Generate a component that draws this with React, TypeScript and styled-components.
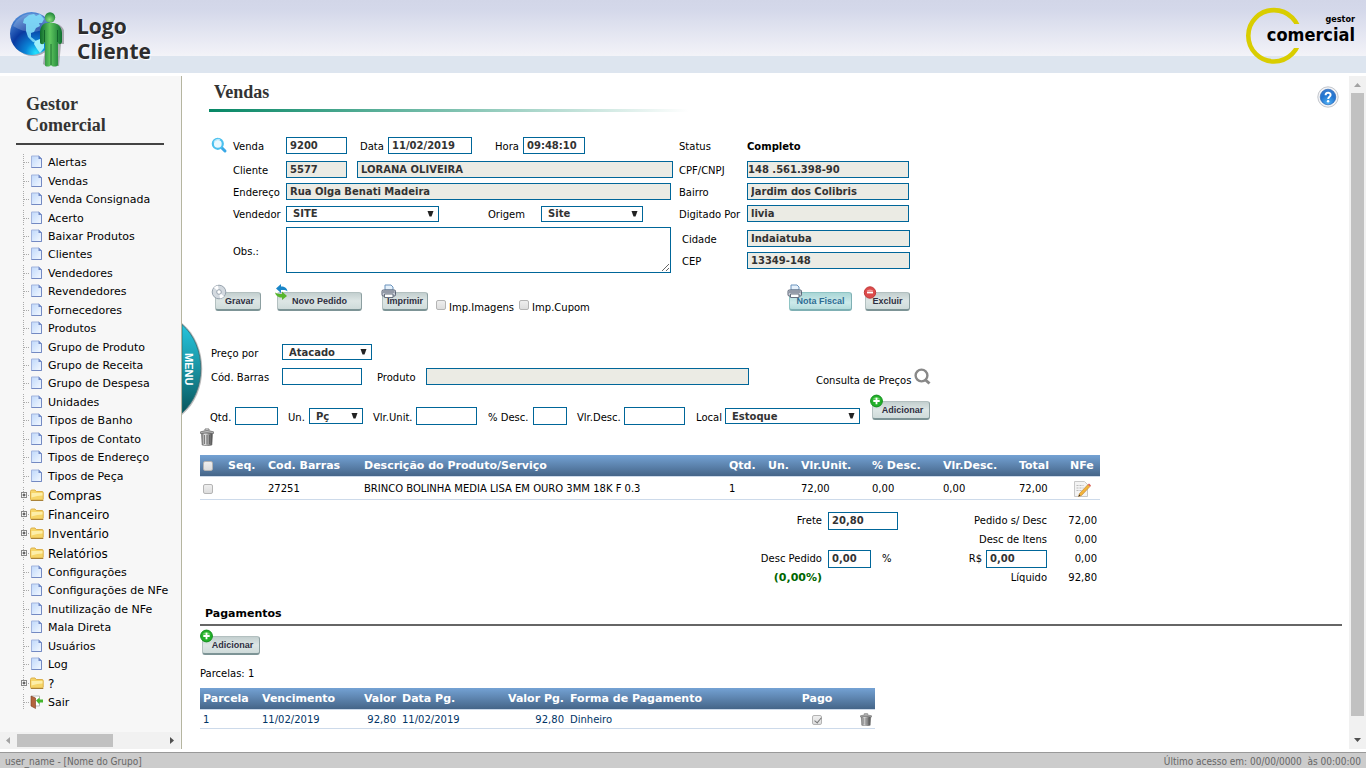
import React from "react";
import styled, { createGlobalStyle, css } from "styled-components";

const Global = createGlobalStyle`
  * { box-sizing: border-box; }
  body {
    margin: 0;
    background: #fff;
    color: #000;
    font: 10px/13px "DejaVu Sans", Verdana, sans-serif;
  }
  button, input, select, textarea { font: inherit; margin: 0; }
  svg { display: block; flex: none; }
`;

const serif = `"Liberation Serif", "Times New Roman", serif`;
const sans = `"Liberation Sans", Arial, sans-serif`;
const condensed = `"DejaVu Sans Condensed", Tahoma, "DejaVu Sans", sans-serif`;
const blue = "#006699";

/* ---------- page frame ---------- */

const Page = styled.div`
  display: flex;
  flex-direction: column;
  height: 100vh;
  min-width: 1180px;
`;

const Header = styled.header`
  display: flex;
  justify-content: space-between;
  flex: none;
  height: 73px;
  padding: 7px 11px 0 10px;
  background: linear-gradient(#d2d6e8 0, #d4d8ea 10px, #f3f3f8 56px, #dde5ef 56px);
`;

const ClientLogo = styled.div`
  display: flex;
  gap: 13px;
  padding-top: 4px;
`;

const ClientName = styled.div`
  padding-top: 3px;
  font: bold 21px/25px "Open Sans", "Noto Sans", sans-serif;
  color: #2d2d2d;
  text-shadow: 1px 1px 1px #fff;
`;

const Brand = styled.div`
  position: relative;
  width: 109px;
  height: 58px;
  text-align: right;
  font-family: ${condensed};
  font-weight: bold;
  & > svg { position: absolute; left: 0; top: 0; }
`;

const BrandSmall = styled.div`
  position: relative;
  padding-top: 6px;
  font-size: 9px;
  line-height: 12px;
`;

const BrandLarge = styled.div`
  position: relative;
  font-size: 18px;
  line-height: 19px;
`;

const Middle = styled.div`
  display: flex;
  flex: 1;
  min-height: 0;
  padding: 3px 0;
`;

const Footer = styled.footer`
  display: flex;
  justify-content: space-between;
  align-items: center;
  flex: none;
  height: 16px;
  padding: 1px 5px 0;
  border-top: 1px solid #999;
  background: #ccc;
  color: #666;
  font: 10px/13px ${condensed};
  white-space: pre;
`;

/* ---------- sidebar ---------- */

const Sidebar = styled.aside`
  display: flex;
  flex-direction: column;
  flex: none;
  width: 182px;
  border-right: 1px solid #b5b5a0;
  background: #f7f7f7;
`;

const SideBody = styled.div`
  display: flex;
  flex-direction: column;
  flex: 1;
  min-height: 0;
  padding: 18px 0 20px;
  overflow: auto;
  scrollbar-width: none;
`;

const SideTitle = styled.h2`
  flex: none;
  margin: 0 17px 9px 16px;
  padding: 0 10px 7px;
  border-bottom: 2px solid #444;
  font: bold 18px/21px ${serif};
  color: #333;
`;

const Tree = styled.ul`
  display: flex;
  flex-direction: column;
  flex: 1;
  margin: 0;
  padding: 0 0 0 20px;
  list-style: none;
`;

const TreeItem = styled.li<{ $folder?: boolean }>`
  display: flex;
  align-items: center;
  flex: 1 0 ${(p) => (p.$folder ? 19 : 18)}px;
  font-size: ${(p) => (p.$folder ? 12 : 11)}px;
  line-height: 16px;
  white-space: nowrap;
  & > svg { margin-bottom: 2px; }
`;

const TreeLink = styled.a`
  color: #000;
  text-decoration: none;
  padding-left: 4px;
`;

const BarH = styled.div`
  display: flex;
  align-items: center;
  justify-content: space-between;
  flex: none;
  height: 17px;
  margin-right: 1px;
  padding: 0 5px;
  background: #f1f1f1;
`;

const ThumbH = styled.div`
  width: 96px;
  height: 13px;
  margin: 0 auto 0 5px;
  background: #c1c1c1;
`;

const BarV = styled.div`
  display: flex;
  flex-direction: column;
  align-items: center;
  flex: none;
  width: 17px;
  padding: 6px 0 5px;
  background: #f1f1f1;
`;

const ThumbV = styled.div`
  flex: 1;
  width: 13px;
  margin: 4px 0 21px;
  background: #c1c1c1;
`;

/* ---------- content ---------- */

const Content = styled.main`
  position: relative;
  flex: 1;
  min-width: 0;
  padding: 6px 7px 0 18px;
  overflow: auto;
  scrollbar-width: none;
`;

const MenuTab = styled.button`
  position: absolute;
  left: 0;
  top: 247px;
  width: 21px;
  height: 92px;
  padding: 0;
  border: 0;
  background: none;
  color: #fff;
  font: bold 11px/14px ${sans};
  & > svg { position: absolute; left: 0; top: 0; }
  & > span { position: absolute; left: 0; top: 0; width: 14px; height: 92px; writing-mode: vertical-rl; text-align: center; }
`;

const TitleRow = styled.div`
  display: flex;
  justify-content: space-between;
  padding-right: 3px;
`;

const Title = styled.h1`
  width: 480px;
  height: 30px;
  margin: 0 0 25px 9px;
  padding: 0 5px;
  font: bold 18px/21px ${serif};
  color: #333;
  background: linear-gradient(90deg, #068765, #7cc0ae 50%, #fff) bottom / 100% 3px no-repeat;
`;

const IconButton = styled.button<{ $top?: number; $bottom?: number }>`
  display: block;
  flex: none;
  align-self: flex-start;
  margin: ${(p) => p.$top || 0}px 0 ${(p) => p.$bottom || 0}px;
  padding: 0;
  border: 0;
  background: none;
`;

const OrderForm = styled.section`
  display: flex;
  gap: 6px;
  padding-left: 11px;
`;

const LeftBlock = styled.div`
  display: flex;
  flex-direction: column;
  gap: 5px;
  width: 462px;
`;

const RightBlock = styled.div`
  display: flex;
  flex-direction: column;
  gap: 5px;
`;

const Address = styled.div`
  display: flex;
  flex-direction: column;
  gap: 5px;
  padding-top: 3px;
`;

const Row = styled.div<{ $tall?: boolean }>`
  display: flex;
  align-items: center;
  min-height: ${(p) => (p.$tall ? 19 : 17)}px;
  padding-bottom: ${(p) => (p.$tall ? 2 : 0)}px;
`;

const Lead = styled.div`
  width: 22px;
  flex: none;
`;

const textWidth = css<{ $w?: number; $pad?: number }>`
  flex: none;
  width: ${(p) => (p.$w ? p.$w + "px" : "auto")};
  padding-left: ${(p) => p.$pad || 0}px;
`;

const Label = styled.label<{ $w?: number; $pad?: number }>`
  ${textWidth}
  padding-top: 2px;
  white-space: nowrap;
`;

const Status = styled.output`
  padding-top: 2px;
  font-weight: bold;
`;

const Field = styled.input<{ $w: number; $tall?: boolean; $tight?: boolean }>`
  flex: none;
  width: ${(p) => p.$w}px;
  height: ${(p) => (p.$tall ? 18 : 17)}px;
  padding: 0 ${(p) => (p.$tight ? 0 : 3)}px;
  border: 1px solid ${blue};
  border-radius: 0;
  outline: 0;
  font-weight: bold;
  color: #333;
  background: #fff;
  &:read-only { background: #ebebe4; }
`;

const SelectBox = styled.span<{ $w: number }>`
  position: relative;
  flex: none;
  width: ${(p) => p.$w}px;
  height: 16px;
  & > svg { position: absolute; right: 5px; top: 5px; pointer-events: none; }
`;

const NativeSelect = styled.select`
  display: block;
  appearance: none;
  width: 100%;
  height: 16px;
  padding: 0 6px;
  border: 1px solid ${blue};
  border-radius: 0;
  background: #fff;
  color: #333;
  font-weight: bold;
`;

const Notes = styled.textarea`
  width: 385px;
  height: 46px;
  padding: 2px;
  border: 1px solid ${blue};
  color: #333;
  font-weight: bold;
`;

const Check = styled.input.attrs({ type: "checkbox" })`
  appearance: none;
  display: block;
  flex: none;
  width: 10px;
  height: 10px;
  border: 1px solid #b4b4b4;
  border-radius: 2px;
  background: linear-gradient(#eee, #ddd);
  &:checked::after {
    content: "";
    display: block;
    width: 3px;
    height: 6px;
    margin: 0 0 0 3px;
    border: solid #777;
    border-width: 0 1px 1px 0;
    transform: rotate(40deg);
  }
`;

const CheckLabel = styled.label`
  display: flex;
  gap: 3px;
  line-height: 15px;
  & > input { margin-top: 1px; }
  & > span { padding-top: 1px; }
`;

const Actions = styled.div`
  display: flex;
  align-items: flex-start;
  width: 695px;
  margin: 19px 0 0 15px;
  & > :nth-child(2) { margin-left: 16px; }
  & > :nth-child(3) { margin: 0 8px 0 20px; }
  & > label { margin: 7px 5px 0 0; }
  & > :nth-child(6) { margin-left: auto; }
  & > :nth-child(7) { margin-left: 13px; }
`;

const PushButton = styled.button<{ $w: number; $pad?: number; $teal?: boolean; $icon?: number }>`
  position: relative;
  flex: none;
  width: ${(p) => p.$w}px;
  height: 19px;
  padding: 0 0 0 ${(p) => p.$pad || 0}px;
  border: 1px solid ${(p) => (p.$teal ? "#8fc4c4" : "#b3c0c0")};
  border-width: 1px 1px 2px;
  border-right-color: ${(p) => (p.$teal ? "#7fb0b4" : "#8c9fa1")};
  border-bottom-color: ${(p) => (p.$teal ? "#7fb0b4" : "#7d9496")};
  border-radius: 3px;
  background: ${(p) =>
    p.$teal
      ? "linear-gradient(#a9d6d6, #cdeaea 60%, #b4dcdc)"
      : "linear-gradient(#c3cfcf, #dde6e5 50%, #cfdbda)"};
  color: ${(p) => (p.$teal ? "#2d6c94" : "#2e2e40")};
  font: bold 9px/14px ${sans};
  text-align: center;
  white-space: nowrap;
  & > svg { position: absolute; left: -${(p) => p.$icon || 5}px; top: -9px; }
`;

const ProductForm = styled.section`
  margin: 29px 0 -3px 10px;
`;

const Line = styled.div<{ $gap?: number }>`
  display: flex;
  align-items: center;
  margin-bottom: ${(p) => p.$gap || 0}px;
`;

const PriceLink = styled.a`
  display: flex;
  gap: 3px;
  margin: 0 0 0 67px;
  color: #000;
  text-decoration: none;
  & > span { padding-top: 8px; }
  & > svg { margin-top: 2px; }
`;

const AddSlot = styled.div`
  margin: 0 0 12px 12px;
  height: 18px;
`;

/* ---------- tables ---------- */

const Grid = styled.table<{ $w: number; $pad?: number; $ink?: string }>`
  width: ${(p) => p.$w}px;
  table-layout: fixed;
  border-collapse: separate;
  border-spacing: 0;
  color: ${(p) => p.$ink || "#000"};
  th {
    height: 21px;
    padding: 0 ${(p) => p.$pad || 0}px;
    color: #fff;
    font-size: 11px;
    text-align: left;
    white-space: nowrap;
  }
  thead { background: linear-gradient(#74a2d4, #456588); }
  td {
    padding: 1px ${(p) => p.$pad || 0}px 0;
    border: solid #cddaea;
    border-width: 1px 0;
    white-space: nowrap;
  }
  .end { text-align: right; }
  .end > button { margin-left: auto; }
  .mid { text-align: center; }
  .mid > * { margin: 0 auto; }
`;

const ItemRow = styled.tr<{ $h: number }>`
  height: ${(p) => p.$h}px;
`;

const Totals = styled.section`
  display: grid;
  grid-template-columns: 622px 6px 70px 88px 61px 50px;
  grid-auto-rows: 19px;
  align-items: center;
  width: 900px;
  margin-top: 11px;
  text-align: right;
  & > :nth-child(4n + 2) { grid-column: 3; }
`;

const Discount = styled.div`
  display: flex;
  align-items: center;
  gap: 11px;
`;

const Pair = styled.div`
  grid-column: span 2;
`;

const MoneyField = styled.div`
  display: flex;
  align-items: center;
  justify-content: flex-end;
  gap: 4px;
  grid-column: span 2;
`;

const Green = styled.strong`
  color: #006600;
  font-size: 11px;
`;

const SectionTitle = styled.h3`
  margin: 20px 0 10px;
  padding: 0 5px 3px;
  border-bottom: 2px solid #666;
  font-size: 11px;
  line-height: 14px;
`;

const Installments = styled.p`
  margin: 12px 0 8px;
`;

const AddPayment = styled.div`
  margin-left: 2px;
  height: 19px;
`;

/* ---------- drawings ---------- */

const Globe = () => (
  <svg width="54" height="57" viewBox="0 0 54 57">
    <defs>
      <radialGradient id="gl" cx=".6" cy=".95" r=".95">
        <stop offset="0" stopColor="#22e4ff" />
        <stop offset=".25" stopColor="#0a86d8" />
        <stop offset=".6" stopColor="#0a3aa0" />
        <stop offset="1" stopColor="#4f8ad6" />
      </radialGradient>
      <linearGradient id="mn" x1="0" x2="1">
        <stop offset="0" stopColor="#0d6a2c" />
        <stop offset=".45" stopColor="#5fc75f" />
        <stop offset="1" stopColor="#0f7030" />
      </linearGradient>
      <radialGradient id="hd" cx=".45" cy=".7" r=".7">
        <stop offset="0" stopColor="#8be07c" />
        <stop offset="1" stopColor="#1c8438" />
      </radialGradient>
    </defs>
    <ellipse cx="23" cy="24" rx="21.5" ry="21" fill="#5b6478" opacity=".5" />
    <circle cx="21.500" cy="22.500" r="21.500" fill="url(#gl)" />
    <path d="M3 15C8 4 20 0 31 4c5 3 7 7 8 12-10 6-24 7-36-1z" fill="#fff" opacity=".2" />
    <path d="M14 8l5-4 5-1 2 2 4-2 4 5-2 4-3 0 1 3-4 2-2 4-3 1 0 4 4 3 2 3-4-1-5-5-2-6 0-7-3-1z" fill="#7fdcf8" opacity=".9" />
    <path d="M25 30l5-2 4 2v7l-4 5-3-4-3-5z" fill="#9ff0fb" />
    <path d="M38 13h9c5 1 8 6 8 12v8h-4l-2 22h-6l-2-1-5 1-3-2z" fill="#333" opacity=".35" />
    <path d="M36 12h8c5 1 8 5 8 10v9c-1 3-4 3-4 0v23c-1 2-6 2-7 0-1 2-6 2-6 0V31c-1 3-5 3-5 0v-9c0-5 2-9 6-10z" fill="url(#mn)" />
    <path d="M41 33v21M34.500 19v12M47.500 19v12" stroke="#0c5a26" strokeWidth=".8" />
    <circle cx="40" cy="6.500" r="5.200" fill="url(#hd)" />
  </svg>
);

const Ring = () => (
  <svg width="56" height="58" viewBox="0 0 56 58">
    <clipPath id="cut"><path d="M0 0h56v17H40v24h16v17H0z" /></clipPath>
    <circle cx="28" cy="28.800" r="25.700" fill="none" stroke="#d9cd00" strokeWidth="4.600" clipPath="url(#cut)" />
  </svg>
);

const Arrow = ({ d, c }: { d: string; c: string }) => (
  <svg width="7" height="7" viewBox="0 0 7 7"><path d={d} fill={c} /></svg>
);

const Twig = ({ plus }: { plus?: boolean }) => (
  <svg width="10" height="16" viewBox="0 0 10 16">
    <path d="M3.500 0v15M4 8.500h6" stroke="#aaa" strokeDasharray="1 1" fill="none" />
    {plus && (
      <>
        <rect x="1.500" y="5.500" width="5" height="5" fill="#fff" stroke="#888" />
        <path d="M2.500 8h3M4 6.500v3" stroke="#333" />
      </>
    )}
  </svg>
);

const FileIcon = () => (
  <svg width="14" height="16" viewBox="0 0 14 16">
    <defs><linearGradient id="pg" x1="0" y1="0" x2="1" y2="1"><stop offset="0" stopColor="#bfd8fb" /><stop offset="1" stopColor="#f4f9ff" /></linearGradient></defs>
    <path d="M1.500 2h7.500l2.500 2.500V13.500h-10z" fill="url(#pg)" stroke="#a3b5de" />
    <path d="M11.500 4.500v9h-10" fill="none" stroke="#7389c2" />
    <path d="M8.500 1.500v3.500H12z" fill="#6f87c4" />
  </svg>
);

const FolderIcon = () => (
  <svg width="14" height="14" viewBox="0 0 14 14">
    <path d="M.5 11V3.500q0-1.500 1.500-1.500h3l1.200 1.500H12q1.200 0 1.200 1.200V11q0 1-1 1H1.500q-1 0-1-1z" fill="#f6d568" stroke="#dcb04a" />
    <path d="M1.500 5h11v2.500q-5 0-11 2z" fill="#fdeea8" />
    <path d="M.8 12.500h12.500" stroke="#a98238" />
  </svg>
);

const DoorIcon = () => (
  <svg width="14" height="14" viewBox="0 0 14 14">
    <path d="M1.500 1h8v10h-8z" fill="#fff" stroke="#bbb" />
    <path d="M1 1l4.500 2v10.500L1 11z" fill="#b4643c" stroke="#7a3c20" strokeWidth=".6" />
    <path d="M6 5.500L9.500 2.500v2H13v3H9.500v2z" fill="#44b62c" />
  </svg>
);

const BlueSearch = () => (
  <svg width="17" height="17" viewBox="0 0 17 17">
    <path d="M10.500 10.500l3.500 3.500" stroke="#3aa8e6" strokeWidth="3" strokeLinecap="round" />
    <circle cx="6.800" cy="6.800" r="5" fill="#e9f8fe" stroke="#4cc0ee" strokeWidth="2.200" />
    <path d="M3 5.500a4.500 4.500 0 0 1 6-2.800" stroke="#b5e8fb" fill="none" strokeWidth="1.200" />
  </svg>
);

const GreySearch = () => (
  <svg width="17" height="17" viewBox="0 0 17 17">
    <circle cx="7.500" cy="7.500" r="5.900" fill="none" stroke="#888" strokeWidth="2.400" />
    <path d="M11 11.500l4.500 4" stroke="#888" strokeWidth="3" />
  </svg>
);

const HelpIcon = () => (
  <svg width="22" height="22" viewBox="0 0 22 22">
    <defs><radialGradient id="hp" cx=".5" cy=".9" r=".9"><stop offset="0" stopColor="#4fb0f4" /><stop offset=".6" stopColor="#2173cf" /><stop offset="1" stopColor="#3c7fd0" /></radialGradient></defs>
    <circle cx="11" cy="11" r="10.200" fill="#f2f3f6" stroke="#c3c6cc" />
    <circle cx="11" cy="11" r="7.800" fill="url(#hp)" stroke="#1e5db0" strokeWidth=".6" />
    <path d="M8.600 9.200c0-3.200 5-3.200 5-.2 0 1.900-2.400 1.800-2.400 4" fill="none" stroke="#fff" strokeWidth="2" />
    <circle cx="11.100" cy="15.200" r="1.200" fill="#fff" />
  </svg>
);

const Disc = () => (
  <svg width="16" height="16" viewBox="0 0 16 16">
    <circle cx="8" cy="8" r="6.800" fill="#d3d9df" stroke="#98a3ae" />
    <path d="M8 8L3 3.500A6.500 6.500 0 0 1 7 1.500zM8 8l5 4.500a6.500 6.500 0 0 1-4 2z" fill="#fff" />
    <circle cx="8" cy="8" r="2.300" fill="#fff" stroke="#98a3ae" />
  </svg>
);

const Swap = () => (
  <svg width="17" height="18" viewBox="0 0 17 18">
    <path d="M2 4.500L7 0v2.500c4 0 6 1.500 6.500 5C12 6 10 5.800 7 6v3z" fill="#1a86c8" transform="translate(1 0)" />
    <path d="M14 12L9 7.500V10C6 10 4 10 2 8.500 3 12 5 13.500 9 13.500V16z" fill="#58b52c" />
  </svg>
);

const Printer = () => (
  <svg width="16" height="16" viewBox="0 0 16 16">
    <path d="M4 6V1h6l2 2v3z" fill="#e6f1fb" stroke="#6a93bd" />
    <rect x="1" y="6" width="13.500" height="6" rx="1.200" fill="#c9ced8" stroke="#5b6475" />
    <path d="M2 8h11.500" stroke="#5f6776" />
    <path d="M3.500 10h8.500v3.500H3.500z" fill="#fff" stroke="#66707f" />
  </svg>
);

const Minus = () => (
  <svg width="16" height="16" viewBox="0 0 16 16">
    <circle cx="9" cy="8.500" r="5.700" fill="#dc4a4a" stroke="#c23a3a" />
    <path d="M5.500 7a4 3 0 0 1 7 0z" fill="#f19a9a" />
    <path d="M6 8.500h6" stroke="#fff" strokeWidth="1.800" />
  </svg>
);

const Plus = () => (
  <svg width="16" height="16" viewBox="0 0 16 16">
    <circle cx="8.500" cy="8" r="5.900" fill="#22b02a" stroke="#12901c" />
    <path d="M4.500 6.500a4.500 4 0 0 1 8 0z" fill="#6fd66a" />
    <path d="M5.300 8h6.400M8.500 4.800v6.400" stroke="#fff" strokeWidth="1.800" />
  </svg>
);

const Trash = ({ w, h }: { w: number; h: number }) => (
  <svg width={w} height={h} viewBox="0 0 14 18" preserveAspectRatio="none">
    <defs><linearGradient id="tr" x1="0" x2="1"><stop offset="0" stopColor="#666" /><stop offset=".3" stopColor="#e6e6e6" /><stop offset=".65" stopColor="#999" /><stop offset="1" stopColor="#444" /></linearGradient></defs>
    <path d="M1.500 5h11l-.6 12q-4.900 1.500-9.800 0z" fill="url(#tr)" stroke="#666" strokeWidth=".6" />
    <path d="M4.500 7v9M7 7v9.500M9.500 7v9" stroke="#555" strokeWidth=".7" />
    <path d="M.5 5.500V3.800Q7 1 13.500 3.800v1.700Q7 3.800.5 5.500z" fill="#bbb" stroke="#666" strokeWidth=".7" />
    <path d="M5 2.500V1h4v1.500" fill="none" stroke="#777" />
  </svg>
);

const NoteIcon = () => (
  <svg width="18" height="18" viewBox="0 0 18 18">
    <path d="M1.500 1.500h10l3 3v12h-13z" fill="#f3f3f3" stroke="#c8c8c8" />
    <path d="M3.500 5.500h7M3.500 8h7M3.500 10.500h5" stroke="#bbb" strokeDasharray="2 1" />
    <path d="M6.500 13.500L15 4.500l2 2-8.500 9-3 1z" fill="#f3b43a" stroke="#b5803a" strokeWidth=".6" />
    <path d="M15 4.500l1-1 2 2-1 1z" fill="#d55" />
    <path d="M5.500 16.500l.8-2 1 1z" fill="#222" />
  </svg>
);

const TabShape = () => (
  <svg width="21" height="92" viewBox="0 0 21 92">
    <defs><linearGradient id="tb" x1="0" x2="0" y1="0" y2="1"><stop offset="0" stopColor="#27c4dc" /><stop offset=".45" stopColor="#1a98a8" /><stop offset="1" stopColor="#08565c" /></linearGradient></defs>
    <path d="M0 0C27 22 27 70 0 92z" fill="#777" opacity=".5" />
    <path d="M0 1.500C25 23 25 68 0 90z" fill="url(#tb)" stroke="#2c6c74" strokeWidth=".8" />
  </svg>
);

/* ---------- small components ---------- */

type SelProps = { id: string; w: number; value: string };

const Select = ({ id, w, value }: SelProps) => (
  <SelectBox $w={w}>
    <NativeSelect id={id} defaultValue={value}>
      <option>{value}</option>
    </NativeSelect>
    <svg width="7" height="6" viewBox="0 0 7 6"><path d="M.5 0h6l-2 5.500h-2z" fill="#222" /></svg>
  </SelectBox>
);

const folders = ["Compras", "Financeiro", "Inventário", "Relatórios", "?"];

const menu = [
  "Alertas", "Vendas", "Venda Consignada", "Acerto", "Baixar Produtos", "Clientes",
  "Vendedores", "Revendedores", "Fornecedores", "Produtos", "Grupo de Produto",
  "Grupo de Receita", "Grupo de Despesa", "Unidades", "Tipos de Banho",
  "Tipos de Contato", "Tipos de Endereço", "Tipos de Peça", "Compras", "Financeiro",
  "Inventário", "Relatórios", "Configurações", "Configurações de NFe",
  "Inutilização de NFe", "Mala Direta", "Usuários", "Log", "?", "Sair",
];

const SideMenu = () => (
  <Sidebar>
    <SideBody>
      <SideTitle>Gestor Comercial</SideTitle>
      <Tree>
        {menu.map((name) => {
          const folder = folders.includes(name);
          return (
            <TreeItem key={name} $folder={folder}>
              <Twig plus={folder} />
              {folder ? <FolderIcon /> : name === "Sair" ? <DoorIcon /> : <FileIcon />}
              <TreeLink href="#">{name}</TreeLink>
            </TreeItem>
          );
        })}
      </Tree>
    </SideBody>
    <BarH>
      <Arrow d="M5 0v7L1 3.500z" c="#a3a3a3" />
      <ThumbH />
      <Arrow d="M2 0v7l4-3.500z" c="#505050" />
    </BarH>
  </Sidebar>
);

const Order = () => (
  <OrderForm>
    <LeftBlock>
      <Row $tall>
        <Lead><BlueSearch /></Lead>
        <Label htmlFor="venda" $w={53}>Venda</Label>
        <Field id="venda" $w={61} defaultValue="9200" />
        <Label htmlFor="data" $w={41} $pad={13}>Data</Label>
        <Field id="data" $w={84} defaultValue="11/02/2019" />
        <Label htmlFor="hora" $w={51} $pad={23}>Hora</Label>
        <Field id="hora" $w={62} defaultValue="09:48:10" />
      </Row>
      <Row>
        <Lead />
        <Label htmlFor="cliente" $w={53}>Cliente</Label>
        <Field id="cliente" $w={61} readOnly defaultValue="5577" />
        <Label htmlFor="nome" $w={10} aria-label="Nome" />
        <Field id="nome" $w={316} readOnly defaultValue="LORANA OLIVEIRA" />
      </Row>
      <Row>
        <Lead />
        <Label htmlFor="endereco" $w={53}>Endereço</Label>
        <Field id="endereco" $w={385} readOnly defaultValue="Rua Olga Benati Madeira" />
      </Row>
      <Row>
        <Lead />
        <Label htmlFor="vendedor" $w={53}>Vendedor</Label>
        <Select id="vendedor" w={153} value="SITE" />
        <Label htmlFor="origem" $w={102} $pad={49}>Origem</Label>
        <Select id="origem" w={102} value="Site" />
      </Row>
      <Row>
        <Lead />
        <Label htmlFor="obs" $w={53}>Obs.:</Label>
        <Notes id="obs" />
      </Row>
    </LeftBlock>
    <RightBlock>
      <Row $tall>
        <Label htmlFor="status" $w={68}>Status</Label>
        <Status id="status">Completo</Status>
      </Row>
      <Row>
        <Label htmlFor="cpf" $w={68}>CPF/CNPJ</Label>
        <Field id="cpf" $w={162} $tight readOnly defaultValue="148 .561.398-90" />
      </Row>
      <Row>
        <Label htmlFor="bairro" $w={68}>Bairro</Label>
        <Field id="bairro" $w={162} readOnly defaultValue="Jardim dos Colibris" />
      </Row>
      <Row>
        <Label htmlFor="digitado" $w={68}>Digitado Por</Label>
        <Field id="digitado" $w={162} readOnly defaultValue="livia" />
      </Row>
      <Address>
        <Row>
          <Label htmlFor="cidade" $w={68} $pad={3}>Cidade</Label>
          <Field id="cidade" $w={163} readOnly defaultValue="Indaiatuba" />
        </Row>
        <Row>
          <Label htmlFor="cep" $w={68} $pad={3}>CEP</Label>
          <Field id="cep" $w={163} readOnly defaultValue="13349-148" />
        </Row>
      </Address>
    </RightBlock>
  </OrderForm>
);

const Product = () => (
  <ProductForm>
    <Line $gap={6}>
      <Label htmlFor="preco" $w={72} $pad={1}>Preço por</Label>
      <Select id="preco" w={90} value="Atacado" />
    </Line>
    <Line $gap={14}>
      <Label htmlFor="barras" $w={72} $pad={1}>Cód. Barras</Label>
      <Field id="barras" $w={80} />
      <Label htmlFor="produto" $w={64} $pad={15}>Produto</Label>
      <Field id="produto" $w={323} readOnly />
      <PriceLink href="#"><span>Consulta de Preços</span><GreySearch /></PriceLink>
    </Line>
    <Line>
      <Label htmlFor="qtd" $w={25}>Qtd.</Label>
      <Field id="qtd" $w={43} $tall />
      <Label htmlFor="un" $w={31} $pad={10}>Un.</Label>
      <Select id="un" w={54} value="Pç" />
      <Label htmlFor="unit" $w={53} $pad={10}>Vlr.Unit.</Label>
      <Field id="unit" $w={61} $tall />
      <Label htmlFor="pdesc" $w={56} $pad={11}>% Desc.</Label>
      <Field id="pdesc" $w={34} $tall />
      <Label htmlFor="vdesc" $w={57} $pad={10}>Vlr.Desc.</Label>
      <Field id="vdesc" $w={61} $tall />
      <Label htmlFor="local" $w={40} $pad={11}>Local</Label>
      <Select id="local" w={135} value="Estoque" />
      <AddSlot><PushButton type="button" $w={58} $pad={3}><Plus />Adicionar</PushButton></AddSlot>
    </Line>
  </ProductForm>
);

const itemCols = [28, 40, 96, 365, 39, 33, 71, 71, 76, 51, 30];
const payCols = [59, 80, 60, 80, 88, 220, 60, 28];

const Cols = ({ list }: { list: number[] }) => (
  <colgroup>{list.map((w, i) => <col key={i} style={{ width: w }} />)}</colgroup>
);

const CheckCell = styled.div`
  padding-left: 3px;
`;

export default function App() {
  return (
    <Page>
      <Global />
      <Header>
        <ClientLogo>
          <Globe />
          <ClientName>Logo<br />Cliente</ClientName>
        </ClientLogo>
        <Brand>
          <Ring />
          <BrandSmall>gestor</BrandSmall>
          <BrandLarge>comercial</BrandLarge>
        </Brand>
      </Header>
      <Middle>
        <SideMenu />
        <Content>
          <MenuTab type="button"><TabShape /><span>MENU</span></MenuTab>
          <TitleRow>
            <Title>Vendas</Title>
            <IconButton type="button" aria-label="Ajuda" $top={4}><HelpIcon /></IconButton>
          </TitleRow>
          <Order />
          <Actions>
            <PushButton type="button" $w={46} $pad={3}><Disc />Gravar</PushButton>
            <PushButton type="button" $w={85}><Swap />Novo Pedido</PushButton>
            <PushButton type="button" $w={46} $icon={2}><Printer />Imprimir</PushButton>
            <CheckLabel><Check /><span>Imp.Imagens</span></CheckLabel>
            <CheckLabel><Check /><span>Imp.Cupom</span></CheckLabel>
            <PushButton type="button" $w={63} $icon={3} $teal><Printer />Nota Fiscal</PushButton>
            <PushButton type="button" $w={45}><Minus />Excluir</PushButton>
          </Actions>
          <Product />
          <IconButton type="button" aria-label="Remover itens" $bottom={9}><Trash w={14} h={18} /></IconButton>
          <Grid $w={900}>
            <Cols list={itemCols} />
            <thead>
              <tr>
                <th><CheckCell><Check aria-label="Todos" /></CheckCell></th>
                <th>Seq.</th><th>Cod. Barras</th><th>Descrição do Produto/Serviço</th>
                <th>Qtd.</th><th>Un.</th><th>Vlr.Unit.</th><th>% Desc.</th>
                <th>Vlr.Desc.</th><th>Total</th><th>NFe</th>
              </tr>
            </thead>
            <tbody>
              <ItemRow $h={24}>
                <td><CheckCell><Check aria-label="Item 27251" /></CheckCell></td>
                <td /><td>27251</td>
                <td>BRINCO BOLINHA MEDIA LISA EM OURO 3MM 18K F 0.3</td>
                <td>1</td><td /><td>72,00</td><td>0,00</td><td>0,00</td><td>72,00</td>
                <td><CheckCell><IconButton type="button" aria-label="Editar NFe"><NoteIcon /></IconButton></CheckCell></td>
              </ItemRow>
            </tbody>
          </Grid>
          <Totals>
            <label htmlFor="frete">Frete</label>
            <Field id="frete" $w={70} $tall defaultValue="20,80" />
            <Pair>Pedido s/ Desc</Pair>
            <span>72,00</span>
            <span />
            <span />
            <Pair>Desc de Itens</Pair>
            <span>0,00</span>
            <label htmlFor="descp">Desc Pedido</label>
            <Discount><Field id="descp" $w={43} $tall defaultValue="0,00" />%</Discount>
            <MoneyField><label htmlFor="descr">R$</label><Field id="descr" $w={61} $tall defaultValue="0,00" /></MoneyField>
            <span>0,00</span>
            <Green>(0,00%)</Green>
            <span />
            <Pair>Líquido</Pair>
            <span>92,80</span>
          </Totals>
          <SectionTitle>Pagamentos</SectionTitle>
          <AddPayment><PushButton type="button" $w={58} $pad={3}><Plus />Adicionar</PushButton></AddPayment>
          <Installments>Parcelas: 1</Installments>
          <Grid $w={675} $pad={3} $ink="#003366">
            <Cols list={payCols} />
            <thead>
              <tr>
                <th>Parcela</th><th>Vencimento</th><th className="end">Valor</th><th>Data Pg.</th>
                <th className="end">Valor Pg.</th><th>Forma de Pagamento</th><th className="mid">Pago</th><th />
              </tr>
            </thead>
            <tbody>
              <ItemRow $h={20}>
                <td>1</td><td>11/02/2019</td><td className="end">92,80</td><td>11/02/2019</td>
                <td className="end">92,80</td><td>Dinheiro</td>
                <td className="mid"><Check defaultChecked disabled aria-label="Pago" /></td>
                <td className="end"><IconButton type="button" aria-label="Excluir parcela"><Trash w={12} h={13} /></IconButton></td>
              </ItemRow>
            </tbody>
          </Grid>
        </Content>
        <BarV>
          <Arrow d="M0 5h7L3.500 1z" c="#a3a3a3" />
          <ThumbV />
          <Arrow d="M0 1h7L3.500 5z" c="#505050" />
        </BarV>
      </Middle>
      <Footer>
        <span>user_name - [Nome do Grupo]</span>
        <span>Último acesso em: 00/00/0000  às 00:00:00</span>
      </Footer>
    </Page>
  );
}
